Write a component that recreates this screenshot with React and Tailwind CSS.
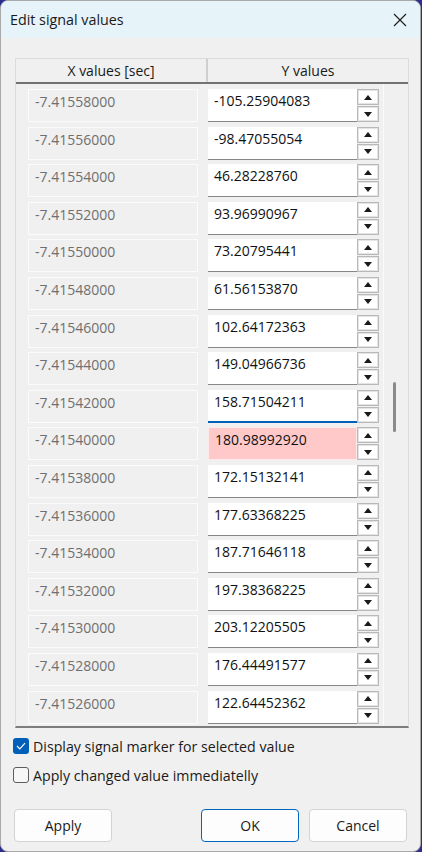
import React from "react";

const xs = [
  "-7.41558000","-7.41556000","-7.41554000","-7.41552000","-7.41550000","-7.41548000",
  "-7.41546000","-7.41544000","-7.41542000","-7.41540000","-7.41538000","-7.41536000",
  "-7.41534000","-7.41532000","-7.41530000","-7.41528000","-7.41526000",
];
const ys = [
  "-105.25904083","-98.47055054","46.28228760","93.96990967","73.20795441","61.56153870",
  "102.64172363","149.04966736","158.71504211","180.98992920","172.15132141","177.63368225",
  "187.71646118","197.38368225","203.12205505","176.44491577","122.64452362",
];

function Tri({ up }) {
  return (
    <svg width="8" height="5" viewBox="0 0 8 5">
      {up ? <polygon points="0,5 8,5 4,0" fill="#1a1a1a" /> : <polygon points="0,0 8,0 4,5" fill="#1a1a1a" />}
    </svg>
  );
}

function Spin() {
  return (
    <div className="flex flex-col gap-[1px] w-[22px] h-[33px]">
      <div className="h-[16px] flex items-center justify-center bg-white border border-[#b9b9b9] shadow-[inset_0_0_0_1px_#e4e4e4]">
        <Tri up />
      </div>
      <div className="flex-1 flex items-center justify-center bg-white border border-[#b9b9b9] shadow-[inset_0_0_0_1px_#e4e4e4]">
        <Tri />
      </div>
    </div>
  );
}

function Row({ x, y, i }) {
  const focused = i === 8;
  const pink = i === 9;
  let yCls = "bg-white border-b border-[#868686]";
  if (focused) yCls = "bg-white border-b-2 border-[#005fb8]";
  if (pink) yCls = "bg-[#ffc9c9] border border-[#fbeaea]";
  return (
    <div className="flex h-[33px] shrink-0">
      <div className="w-[170px] h-[33px] border border-[#fbfbfb] bg-[#f0f0f0] pl-[6px] pt-[2px] text-[#6f6f6f]">
        {x}
      </div>
      <div className={`ml-[10px] w-[149px] h-[33px] pl-[6px] pt-[2px] text-[#111] ${yCls}`}>{y}</div>
      <Spin />
    </div>
  );
}

function Check({ checked, label }) {
  return (
    <div className="flex items-center h-[16px] gap-[4px]">
      {checked ? (
        <div className="w-[16px] h-[16px] rounded-[3px] bg-[#005fb8] flex items-center justify-center">
          <svg width="10" height="8" viewBox="0 0 10 8">
            <polyline points="1,4 3.8,6.8 9,1.2" fill="none" stroke="#fff" strokeWidth="1.2" />
          </svg>
        </div>
      ) : (
        <div className="w-[16px] h-[16px] rounded-[3px] bg-[#f7f7f7] border border-[#5d5d5d]" />
      )}
      <span className="text-[#1a1a1a] text-[14.2px]">{label}</span>
    </div>
  );
}

function Btn({ children, primary }) {
  return (
    <div
      className={`w-[98px] h-[33px] rounded-[4px] flex items-center justify-center bg-[#fdfdfd] text-[#1a1a1a] ${
        primary ? "border border-[#0067c0]" : "border border-[#d3d3d3]"
      }`}
    >
      {children}
    </div>
  );
}

export default function App() {
  return (
    <div
      className="w-[422px] h-[852px] bg-[linear-gradient(90deg,#2b2b90,#2d9bd8_20%,#4fc46a_45%,#e9d44a_65%,#e7873a_85%,#2b2b90)]"
      style={{ fontFamily: '"Open Sans", "Noto Sans", sans-serif' }}
    >
      <div className="w-[421px] h-[852px] flex flex-col bg-[#f0f0f0] border border-[#a9a9a9] rounded-[8px] overflow-hidden text-[14px] leading-[19px]">
        <div className="h-[37px] shrink-0 flex items-center justify-between pl-[9px] pr-[13px] bg-[#e6f3f9] text-[#1a1a1a] text-[14.3px]">
          <span>Edit signal values</span>
          <svg width="14" height="14" viewBox="0 0 14 14">
            <path d="M1 1 L13 13 M13 1 L1 13" stroke="#1a1a1a" strokeWidth="1.1" fill="none" />
          </svg>
        </div>

        <div className="px-[14px] pt-[20px]">
          <div className="w-[394px] h-[670px] flex flex-col border-x border-t border-[#dcdcdc] border-b-2 border-b-[#7d7d7d]">
            <div className="h-[25px] shrink-0 flex bg-[#f0f0f0] text-[#1a1a1a] border-b-2 border-[#727272]">
              <div className="w-[192px] flex items-center justify-center border-r-2 border-[#cfcfcf]">X values [sec]</div>
              <div className="flex-1 flex items-center justify-center">Y values</div>
            </div>
            <div className="flex-1 flex min-h-0">
              <div className="w-[367px] flex flex-col gap-[4.6px] pl-[12px] pt-[5px] overflow-hidden">
                {xs.map((x, i) => (
                  <Row key={i} i={i} x={x} y={ys[i]} />
                ))}
              </div>
              <div className="flex-1 border-l border-[#fafafa] pt-[298px] pl-[9px]">
                <div className="w-[3px] h-[50px] rounded-full bg-[#8a8a8a]" />
              </div>
            </div>
          </div>
        </div>

        <div className="flex flex-col gap-[13px] pl-[12px] mt-[10px]">
          <Check checked label="Display signal marker for selected value" />
          <Check label="Apply changed value immediatelly" />
        </div>

        <div className="mt-auto flex items-center px-[13px] pb-[9px]">
          <Btn>Apply</Btn>
          <div className="flex-1" />
          <Btn primary>OK</Btn>
          <div className="w-[10px]" />
          <Btn>Cancel</Btn>
        </div>
      </div>
    </div>
  );
}
